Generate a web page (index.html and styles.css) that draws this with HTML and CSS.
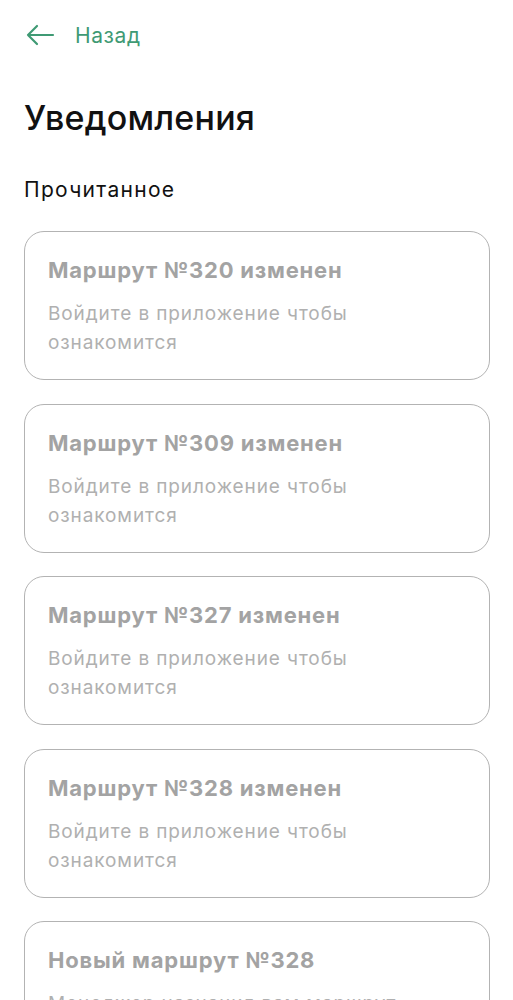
FILE: index.html
```html
<!DOCTYPE html>
<html lang="ru">
<head>
<meta charset="utf-8">
<link rel="stylesheet" href="styles.css">
</head>
<body>
<div class="page">
  <a class="back" href="#">
    <svg class="back-icon" width="30" height="22" viewBox="0 0 30 22" fill="none">
      <path d="M28 11H3M12 2L3 11l9 9" stroke="#3f9a74" stroke-width="2.2" stroke-linecap="round" stroke-linejoin="round"/>
    </svg>
    <span>Назад</span>
  </a>
  <h1 class="title">Уведомления</h1>
  <h2 class="section">Прочитанное</h2>
  <div class="list">
    <div class="card">
      <div class="card-title">Маршрут №320 изменен</div>
      <div class="card-text">Войдите в приложение чтобы<br>ознакомится</div>
    </div>
    <div class="card">
      <div class="card-title">Маршрут №309 изменен</div>
      <div class="card-text">Войдите в приложение чтобы<br>ознакомится</div>
    </div>
    <div class="card">
      <div class="card-title">Маршрут №327 изменен</div>
      <div class="card-text">Войдите в приложение чтобы<br>ознакомится</div>
    </div>
    <div class="card">
      <div class="card-title">Маршрут №328 изменен</div>
      <div class="card-text">Войдите в приложение чтобы<br>ознакомится</div>
    </div>
    <div class="card">
      <div class="card-title">Новый маршрут №328</div>
      <div class="card-text">Менеджер назначил вам маршрут</div>
    </div>
  </div>
</div>
</body>
</html>
```

FILE: styles.css
```css
html, body {
  margin: 0;
  padding: 0;
  background: #ffffff;
  overflow: hidden;
}
body {
  font-family: Inter, "Noto Sans", "Liberation Sans", sans-serif;
}
.page {
  padding: 20px 23px 0 24px;
}
.back {
  display: flex;
  align-items: center;
  gap: 20px;
  height: 30px;
  color: #3f9a74;
  text-decoration: none;
  font-size: 21px;
  letter-spacing: 0.6px;
  margin-left: 1px;
}
.title {
  margin: 48px 0 0;
  font-size: 34px;
  font-weight: 500;
  line-height: 40px;
  color: #111111;
  letter-spacing: 0.2px;
}
.section {
  margin: 38px 0 0;
  font-size: 21px;
  font-weight: 400;
  line-height: 28px;
  color: #111111;
  letter-spacing: 1.3px;
}
.list {
  margin-top: 27px;
  display: flex;
  flex-direction: column;
  gap: 23.5px;
}
.card {
  border: 1.5px solid #b3b3b3;
  border-radius: 20px;
  padding: 23px 23px 23px;
  height: 149px;
  box-sizing: border-box;
  flex-shrink: 0;
}
.card-title {
  font-size: 22px;
  font-weight: 700;
  line-height: 30px;
  color: #a3a3a3;
  letter-spacing: 0.8px;
}
.card-text {
  margin-top: 14px;
  font-size: 19px;
  line-height: 29px;
  color: #b0b0b0;
  letter-spacing: 0.9px;
}
```
